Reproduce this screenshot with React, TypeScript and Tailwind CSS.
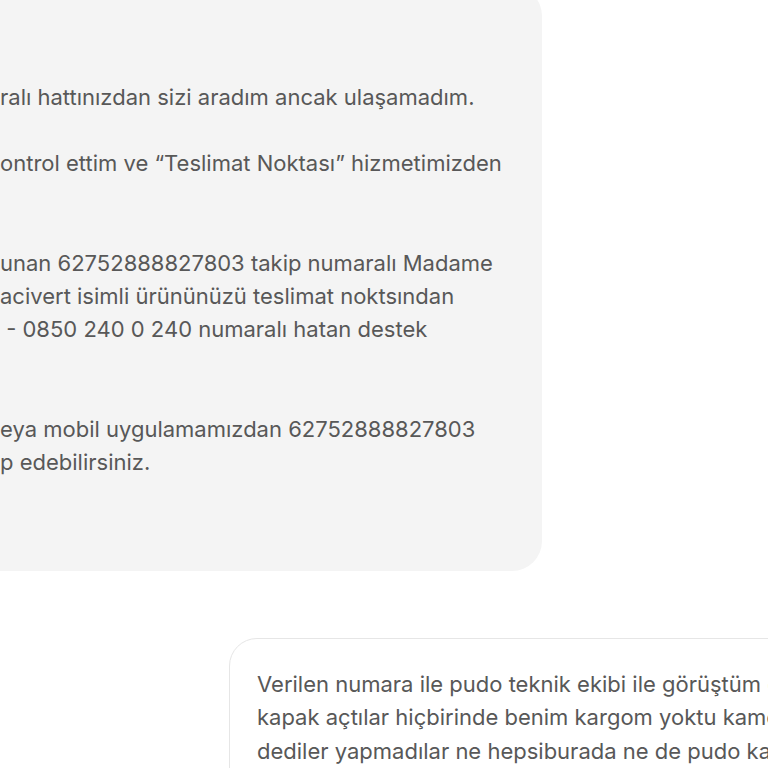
const agentParagraphs = [
  ["ralı hattınızdan sizi aradım ancak ulaşamadım."],
  ["ontrol ettim ve “Teslimat Noktası” hizmetimizden", ""],
  [
    "unan 62752888827803 takip numaralı Madame",
    "acivert isimli ürününüzü teslimat noktsından",
    " - 0850 240 0 240 numaralı hatan destek",
    "",
  ],
  ["eya mobil uygulamamızdan 62752888827803", "p edebilirsiniz."],
];

const userLines = [
  "Verilen numara ile pudo teknik ekibi ile görüştüm d",
  "kapak açtılar hiçbirinde benim kargom yoktu kame",
  "dediler yapmadılar ne hepsiburada ne de pudo ka",
];

export default function App() {
  return (
    <div
      className="h-[768px] w-[768px] overflow-hidden bg-white text-[22px] leading-[33.2px] text-[#585858]"
      style={{ fontFamily: "Inter, 'Noto Sans', sans-serif" }}
    >
      <div className="flex flex-col">
        <div className="-mt-[14px] -ml-[40px] w-[582px] rounded-[30px] bg-[#f4f4f4] pt-[95px] pb-[92px] pl-[40px]">
          <div className="flex flex-col gap-[33.2px]">
            {agentParagraphs.map((lines, i) => (
              <div key={i}>
                {lines.map((line, j) => (
                  <div key={j} className="h-[33.2px] whitespace-pre">
                    {line}
                  </div>
                ))}
              </div>
            ))}
          </div>
        </div>

        <div className="mt-[67px] ml-[229px] w-[620px] rounded-[28px] border border-[#e6e6e6] bg-white pt-[29px] pb-[40px] pl-[27px]">
          {userLines.map((line) => (
            <div key={line} className="h-[33.2px] whitespace-nowrap">
              {line}
            </div>
          ))}
        </div>
      </div>
    </div>
  );
}
